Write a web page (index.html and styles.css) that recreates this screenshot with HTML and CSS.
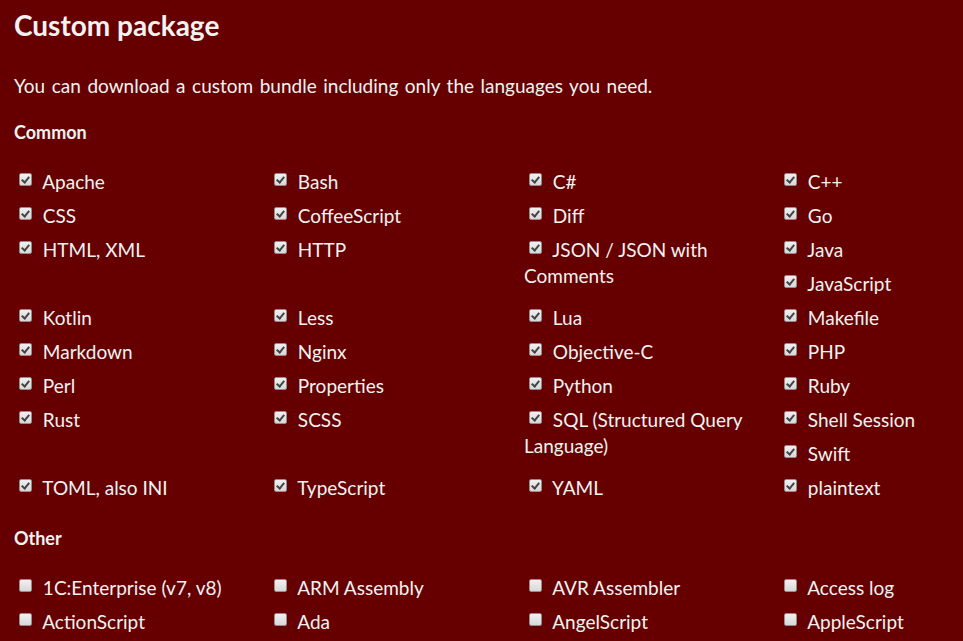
FILE: index.html
```html
<!DOCTYPE html>
<html>
    <head>
        <meta charset="utf-8">
        <title>Custom package</title>
        <link rel="stylesheet" href="styles.css">
    </head>
    <body>
        <div id="download">
            <h2>Custom package</h2>
            <p class="intro">You can download a custom bundle including only the languages you need.</p>

            <h3>Common</h3>
            <ul class="languages">
                <li><label><input type="checkbox" checked> Apache</label></li>
                <li><label><input type="checkbox" checked> Bash</label></li>
                <li><label><input type="checkbox" checked> C#</label></li>
                <li><label><input type="checkbox" checked> C++</label></li>
                <li><label><input type="checkbox" checked> CSS</label></li>
                <li><label><input type="checkbox" checked> CoffeeScript</label></li>
                <li><label><input type="checkbox" checked> Diff</label></li>
                <li><label><input type="checkbox" checked> Go</label></li>
                <li><label><input type="checkbox" checked> HTML, XML</label></li>
                <li><label><input type="checkbox" checked> HTTP</label></li>
                <li><label><input type="checkbox" checked> JSON / JSON with Comments</label></li>
                <li><label><input type="checkbox" checked> Java</label></li>
                <li><label><input type="checkbox" checked> JavaScript</label></li>
                <li><label><input type="checkbox" checked> Kotlin</label></li>
                <li><label><input type="checkbox" checked> Less</label></li>
                <li><label><input type="checkbox" checked> Lua</label></li>
                <li><label><input type="checkbox" checked> Makefile</label></li>
                <li><label><input type="checkbox" checked> Markdown</label></li>
                <li><label><input type="checkbox" checked> Nginx</label></li>
                <li><label><input type="checkbox" checked> Objective-C</label></li>
                <li><label><input type="checkbox" checked> PHP</label></li>
                <li><label><input type="checkbox" checked> Perl</label></li>
                <li><label><input type="checkbox" checked> Properties</label></li>
                <li><label><input type="checkbox" checked> Python</label></li>
                <li><label><input type="checkbox" checked> Ruby</label></li>
                <li><label><input type="checkbox" checked> Rust</label></li>
                <li><label><input type="checkbox" checked> SCSS</label></li>
                <li><label><input type="checkbox" checked> SQL (Structured Query Language)</label></li>
                <li><label><input type="checkbox" checked> Shell Session</label></li>
                <li><label><input type="checkbox" checked> Swift</label></li>
                <li><label><input type="checkbox" checked> TOML, also INI</label></li>
                <li><label><input type="checkbox" checked> TypeScript</label></li>
                <li><label><input type="checkbox" checked> YAML</label></li>
                <li><label><input type="checkbox" checked> plaintext</label></li>
            </ul>

            <h3>Other</h3>
            <ul class="languages">
                <li><label><input type="checkbox"> 1C:Enterprise (v7, v8)</label></li>
                <li><label><input type="checkbox"> ARM Assembly</label></li>
                <li><label><input type="checkbox"> AVR Assembler</label></li>
                <li><label><input type="checkbox"> Access log</label></li>
                <li><label><input type="checkbox"> ActionScript</label></li>
                <li><label><input type="checkbox"> Ada</label></li>
                <li><label><input type="checkbox"> AngelScript</label></li>
                <li><label><input type="checkbox"> AppleScript</label></li>
            </ul>
        </div>
    </body>
</html>
```

FILE: styles.css
```css
* {
    padding: 0;
    margin: 0;
    box-sizing: border-box;
}

html, body {
    overflow: hidden;
}

body {
    background-color: #660000;
    color: #f2f2f2;
    font-family: Lato, "Open Sans", sans-serif;
    font-size: 19px;
    line-height: 26px;
}

#download {
    width: 1048px;
    padding: 0 14px;
}

h2 {
    font-size: 28px;
    line-height: 34px;
    font-weight: 700;
    padding-top: 8px;
}

.intro {
    margin-top: 31px;
    word-spacing: 1.7px;
}

h3 {
    font-size: 18px;
    line-height: 24px;
    font-weight: 700;
    margin-top: 21px;
}

.languages {
    list-style: none;
    margin-top: 21px;
    overflow: hidden;
}

.languages li {
    float: left;
    width: 25%;
    padding: 4px 14px 4px 0;
}

.languages input {
    appearance: none;
    width: 13px;
    height: 13px;
    margin: 0 6px 0 5px;
    vertical-align: 3px;
    border: 1px solid #8f8f8f;
    border-radius: 2px;
    background: linear-gradient(#f0f0f0, #d8d8d8);
    position: relative;
}

.languages input:checked::after {
    content: "";
    position: absolute;
    left: 3px;
    top: 1px;
    width: 3px;
    height: 6px;
    border: solid #444;
    border-width: 0 2px 2px 0;
    transform: rotate(40deg);
}
```
